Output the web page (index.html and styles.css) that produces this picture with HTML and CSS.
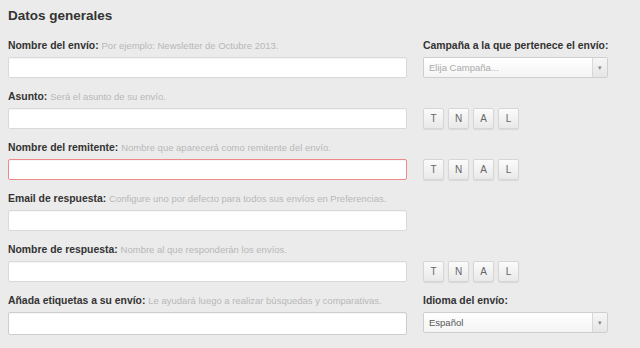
FILE: index.html
```html
<!DOCTYPE html>
<html>
<head>
    <title>Datos generales</title>
    <link rel="stylesheet" href="styles.css">
</head>
<body>
    <h2>Datos generales</h2>

    <div class="row">
        <div class="field">
            <label>Nombre del envío: <span class="hint">Por ejemplo: Newsletter de Octubre 2013.</span></label>
            <input type="text">
        </div>
        <div class="field">
            <label>Campaña a la que pertenece el envío:</label>
            <div class="select placeholder">Elija Campaña...<span class="arrow">▾</span></div>
        </div>
    </div>

    <div class="row">
        <div class="field">
            <label>Asunto: <span class="hint">Será el asunto de su envío.</span></label>
            <input type="text">
        </div>
        <div class="tags">
            <button>T</button><button>N</button><button>A</button><button>L</button>
        </div>
    </div>

    <div class="row">
        <div class="field">
            <label>Nombre del remitente: <span class="hint">Nombre que aparecerá como remitente del envío.</span></label>
            <input type="text" class="invalid">
        </div>
        <div class="tags">
            <button>T</button><button>N</button><button>A</button><button>L</button>
        </div>
    </div>

    <div class="row">
        <div class="field">
            <label>Email de respuesta: <span class="hint">Configure uno por defecto para todos sus envíos en Preferencias.</span></label>
            <input type="text">
        </div>
    </div>

    <div class="row">
        <div class="field">
            <label>Nombre de respuesta: <span class="hint">Nombre al que responderán los envíos.</span></label>
            <input type="text">
        </div>
        <div class="tags">
            <button>T</button><button>N</button><button>A</button><button>L</button>
        </div>
    </div>

    <div class="row">
        <div class="field">
            <label>Añada etiquetas a su envío: <span class="hint">Le ayudará luego a realizar búsquedas y comparativas.</span></label>
            <input type="text" class="tall">
        </div>
        <div class="field">
            <label>Idioma del envío:</label>
            <div class="select">Español<span class="arrow">▾</span></div>
        </div>
    </div>
</body>
</html>
```

FILE: styles.css
```css
body { margin: 0; padding: 0 8px; background: #ebebeb; font-family: "Liberation Sans", Arial, sans-serif; color: #333; }
h2 { margin: 0 0 13px; padding-top: 6px; font-size: 13.5px; line-height: 20px; color: #333; }
.row { display: grid; grid-template-columns: 399px 185px; column-gap: 16px; margin-bottom: 12px; }
.field label { display: block; font-size: 10.4px; font-weight: bold; line-height: 14px; margin-bottom: 4px; white-space: nowrap; }
.hint { font-weight: normal; font-size: 9.5px; color: #b8b8b8; }
input { display: block; box-sizing: border-box; width: 100%; height: 21px; margin: 0; border: 1px solid #d9d9d9; border-radius: 2px; background: #fff; box-shadow: inset 0 1px 1px rgba(0,0,0,0.04); }
input.invalid { border-color: #ec8a8a; }
input.tall { height: 23px; border-color: #cdcdcd; }
.select { position: relative; box-sizing: border-box; height: 21px; border: 1px solid #cfcfcf; border-radius: 2px; background: linear-gradient(#fff, #f4f4f4); font-size: 9.5px; line-height: 19px; padding-left: 5px; color: #555; }
.select.placeholder { color: #aaa; }
.arrow { position: absolute; top: 0; right: 0; width: 14px; height: 19px; border-left: 1px solid #d8d8d8; background: linear-gradient(#f6f6f6, #e6e6e6); font-size: 7px; text-align: center; color: #888; }
.tags { display: flex; gap: 4px; padding-top: 18px; align-items: flex-start; }
.tags button { width: 21px; height: 21px; padding: 0; border: 1px solid #d6d6d6; border-radius: 2px; background: linear-gradient(#fbfbfb, #e9e9e9); box-shadow: 0 1px 1px rgba(0,0,0,0.08); font-family: "Liberation Sans", Arial, sans-serif; font-size: 10px; color: #666; }
```
